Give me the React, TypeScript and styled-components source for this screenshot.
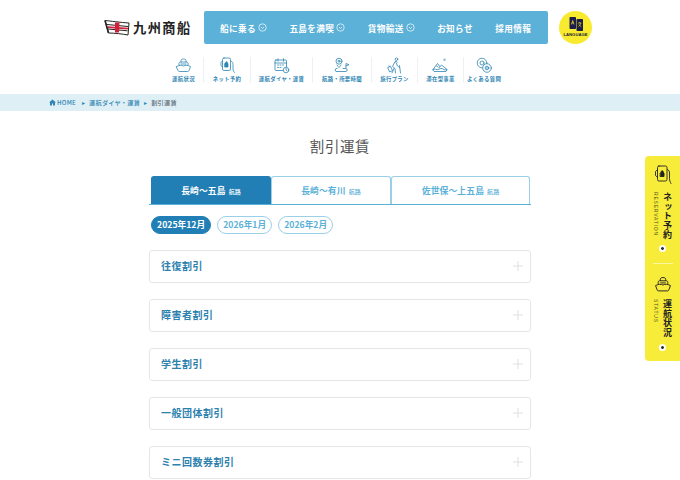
import React from 'react';
import styled, { createGlobalStyle } from 'styled-components';

const Global = createGlobalStyle`
  html, body { margin: 0; padding: 0; background: #fff; overflow: hidden; height: 480px; }
  body { font-family: "Noto Sans CJK JP", "Noto Sans", sans-serif; }
  * { box-sizing: border-box; }
`;

const Page = styled.div`
  position: relative;
  width: 680px;
  height: 480px;
  overflow: hidden;
`;
const Header = styled.header`
  display: flex;
  align-items: flex-start;
  padding: 11px 0 0 104px;
  height: 44px;
`;
const Logo = styled.div`
  display: flex;
  align-items: center;
  width: 100px;
  height: 33px;
  gap: 3px;
`;
const LogoText = styled.span`
  font-family: "Noto Sans CJK JP", sans-serif;
  font-weight: 700;
  font-size: 13.2px;
  letter-spacing: 1.5px;
  line-height: 1;
  color: #222;
  white-space: nowrap;
`;
const Nav = styled.nav`
  display: flex;
  align-items: center;
  gap: 22.4px;
  width: 344px;
  height: 33px;
  padding-left: 16px;
  background: #5cb1d8;
  border-radius: 2px;
`;
const NavItem = styled.span`
  display: flex;
  align-items: center;
  gap: 2px;
  color: #fff;
  font-size: 8.6px;
  font-weight: 700;
  letter-spacing: 0.4px;
  white-space: nowrap;
`;
const Lang = styled.div`
  display: flex;
  flex-direction: column;
  align-items: center;
  width: 33px;
  height: 33px;
  margin-left: 11px;
  padding-top: 6px;
  border-radius: 50%;
  background: #f8ea2f;
`;
const LangText = styled.span`
  font-family: "Liberation Sans", sans-serif;
  font-size: 4.2px;
  line-height: 5px;
  font-weight: 700;
  color: #1c1c3a;
`;
const SubNav = styled.div`
  display: flex;
  padding-left: 164px;
  height: 50px;
  padding-top: 13px;
`;
const SubItem = styled.div<{ $w: number; $last?: boolean }>`
  width: ${p => p.$w}px;
  height: 26px;
  display: flex;
  flex-direction: column;
  align-items: center;
  justify-content: space-between;
  border-right: ${p => (p.$last ? 'none' : '1px solid #eef1f3')};
`;
const SubLabel = styled.span`
  font-size: 5.4px;
  line-height: 7px;
  font-weight: 700;
  letter-spacing: 0.3px;
  color: #2f85b3;
  white-space: nowrap;
`;
const Crumbs = styled.div`
  display: flex;
  align-items: center;
  gap: 4px;
  height: 17px;
  padding-left: 49px;
  background: #dfeff6;
  font-size: 6.2px;
  letter-spacing: 0.2px;
  font-weight: 500;
  color: #2f85b3;
`;
const CrumbHome = styled.span`
  margin: 0 2px 0 -3px;
`;
const CrumbCurrent = styled.span`
  color: #5b6b74;
`;
const Title = styled.h1`
  margin: 24px 0 0;
  height: 41px;
  text-align: center;
  font-size: 14.5px;
  line-height: 21px;
  letter-spacing: 0.6px;
  font-weight: 400;
  color: #555;
`;
const Main = styled.main`
  width: 382px;
  margin-left: 149px;
`;
const Tabs = styled.div`
  display: flex;
  padding: 0 1px 0 2px;
  border-bottom: 1px solid #5cb1d8;
  height: 29px;
`;
const Tab = styled.div<{ $w: number; $active?: boolean }>`
  width: ${p => p.$w}px;
  height: 28px;
  display: flex;
  align-items: center;
  justify-content: center;
  gap: 3px;
  border: 1px solid ${p => (p.$active ? '#217fb5' : '#9ad0e7')};
  border-bottom: none;
  border-radius: 3px 3px 0 0;
  background: ${p => (p.$active ? '#217fb5' : '#fff')};
  color: ${p => (p.$active ? '#fff' : '#5cb1d8')};
  font-size: 8.8px;
  font-weight: 700;
  letter-spacing: 0.1px;
  padding-bottom: 1px;
`;
const TabSuffix = styled.span`
  font-size: 6px;
  font-weight: 500;
  margin-top: 2px;
`;
const Pills = styled.div`
  display: flex;
  gap: 6px;
  padding: 11px 0 0 2px;
  height: 45px;
`;
const Pill = styled.div<{ $active?: boolean }>`
  height: 18px;
  padding: 0 5px 1px;
  display: flex;
  align-items: center;
  border-radius: 9px;
  border: 1px solid ${p => (p.$active ? '#217fb5' : '#9ad0e7')};
  background: ${p => (p.$active ? '#217fb5' : '#fff')};
  color: ${p => (p.$active ? '#fff' : '#5cb1d8')};
  font-size: 8.7px;
  font-weight: 700;
`;
const Accordion = styled.div`
  display: flex;
  flex-direction: column;
  gap: 16px;
`;
const AccRow = styled.div`
  height: 33px;
  display: flex;
  align-items: center;
  justify-content: space-between;
  padding: 0 7px 2px 11px;
  border: 1.5px solid #e4e6e8;
  border-radius: 3px;
  background: #fff;
  color: #2c81ae;
  font-size: 10px;
  font-weight: 700;
  letter-spacing: 0.5px;
`;
const Side = styled.aside`
  position: absolute;
  top: 156px;
  right: 0;
  width: 35px;
  height: 205px;
  background: #f8ec3a;
  border-radius: 4px 0 0 4px;
  display: flex;
  flex-direction: column;
  align-items: center;
  padding-top: 9px;
`;
const SideBlock = styled.div<{ $h: number; $top: number }>`
  height: ${p => p.$h}px;
  padding-top: ${p => p.$top}px;
  display: flex;
  flex-direction: column;
  align-items: center;
  width: 100%;
`;
const SideBody = styled.div`
  display: flex;
  gap: 1px;
  margin-top: 7px;
  width: 21px;
`;
const SideEn = styled.span`
  writing-mode: vertical-rl;
  white-space: nowrap;
  font-family: "Liberation Sans", sans-serif;
  font-size: 5px;
  width: 8px;
  letter-spacing: 0.8px;
  line-height: 8px;
  color: #55521c;
`;
const SideJa = styled.span`
  writing-mode: vertical-rl;
  white-space: nowrap;
  width: 12px;
  font-size: 9px;
  line-height: 12px;
  font-weight: 700;
  letter-spacing: 0.6px;
  color: #222;
`;
const SideDot = styled.span<{ $gap: number }>`
  width: 7px;
  height: 7px;
  border-radius: 50%;
  margin-top: ${p => p.$gap}px;
  background: radial-gradient(circle, #333 0 1.2px, #fff 1.6px);
`;
const SideRule = styled.div`
  flex: none;
  width: 20px;
  height: 1px;
  background: #fbf6a4;
`;

const Circle = () => (
  <svg width="9" height="9" viewBox="0 0 9 9" fill="none" stroke="#fff" strokeWidth=".7">
    <circle cx="4.5" cy="4.5" r="3.7" />
    <path d="M3 4l1.5 1.5L6 4" />
  </svg>
);
const Ico = ({ children }: { children: React.ReactNode }) => (
  <svg width="17" height="17" viewBox="0 0 17 17" fill="none" stroke="#2f85b3" strokeWidth=".8" strokeLinecap="round" strokeLinejoin="round">
    {children}
  </svg>
);
const ShipPaths = () => (
  <>
    <path d="M6 5V3.500C6 2.500 7 2 8.500 2s2.500.5 2.500 1.500V5" />
    <path d="M4 8V6.500C4 5.500 4.700 5 5.500 5h6c.8 0 1.500.5 1.500 1.500V8" />
    <path d="M1.500 9.500c3-1.500 5-1.500 7-.5 2-1 4-1 7 .5L14 13.500c-.2.6-.6 1-1.200 1H4.200c-.6 0-1-.4-1.200-1z" />
    <path d="M6 7h5" />
  </>
);
const icons: React.ReactNode[] = [
  <Ico key="a"><ShipPaths /></Ico>,
  <Ico key="b">
    <rect x="3.500" y="1" width="8" height="12.500" rx="1.500" />
    <path d="M6 6.500h3v3.500H6zM6.700 6.500V5.500a.8.8 0 0 1 1.600 0v1" fill="#2f85b3" />
    <path d="M12 4c1.500.6 2 1.800 2 3.500v4.500c0 1.500.7 2.500 1.500 3.500" />
    <path d="M3.500 4C2.500 4.300 2 5 2 6v2c0 1 .5 1.500 1.500 2" />
  </Ico>,
  <Ico key="c">
    <rect x="2" y="3" width="11.500" height="10.500" rx="1" />
    <path d="M2 6h11.500M5 1.800v2.400M10.500 1.800v2.400M4.500 8h1M7 8h1M9.500 8h1M4.500 10.500h1M7 10.500h1" />
    <circle cx="13" cy="13" r="2.800" fill="#fff" />
    <path d="M13 11.500V13l1 .7" />
  </Ico>,
  <Ico key="d">
    <circle cx="5" cy="4.200" r="3" />
    <circle cx="5" cy="4.200" r="1" />
    <path d="M3 8c.7 1 1.300 1.700 2 2.500.7-.8 1.300-1.500 2-2.500" />
    <path d="M3 11.500H2c-1 0-1 3 0 3h10c1.500 0 1.500-3 0-3h-3M12 11V6.500l3 1.200-3 1.200" />
  </Ico>,
  <Ico key="e">
    <circle cx="10.500" cy="2.200" r="1.300" />
    <path d="M8.800 5L6.500 9.500 9 11.500l.5 4.500M10 5.500l1.500 3.500 2 1.500M9.300 4.500c1-.5 1.700-.3 2 .5M8 11.500l-2 4.500M13.500 8.500l1 7.500" />
    <path d="M2 10.500l2.500-1.300 2 4.300-2.500 1.300zM3.500 9.800L3 8.800" />
  </Ico>,
  <Ico key="f">
    <circle cx="12.500" cy="2.800" r="1.300" fill="#8fc3dc" stroke="none" />
    <path d="M1 12.500l4.500-6L8 9.500l1.500-1.500 5.500 4.500" />
    <path d="M1 12.500c2-1.500 3.500 1 5.500 0s3-1.500 4.500-.5 2.500 1.200 4 .5l-1 2H2.500z" />
    <path d="M4.500 9l1.500 1M8 9.500l-1 1.500" />
  </Ico>,
  <Ico key="g">
    <circle cx="6" cy="6" r="4.800" />
    <circle cx="6" cy="6" r="2" />
    <circle cx="11" cy="11" r="4.300" fill="#fff" />
    <circle cx="11" cy="11" r="1.800" />
    <path d="M11 10.300v1.400" />
  </Ico>,
];
const subItems = [
  { w: 40, t: '運航状況' },
  { w: 47, t: 'ネット予約' },
  { w: 62, t: '運航ダイヤ・運賃' },
  { w: 59, t: '航路・所要時間' },
  { w: 46, t: '旅行プラン' },
  { w: 46, t: '滞在型事業' },
  { w: 40, t: 'よくある質問' },
];

const ShipIcon = () => (
  <svg width="16" height="15" viewBox="1 1.500 15 14" fill="none" stroke="#222" strokeWidth=".9" strokeLinejoin="round">
    <ShipPaths />
  </svg>
);
const PhoneIconDark = () => (
  <svg width="18" height="20" viewBox="0 0 18 20" fill="none" stroke="#222" strokeWidth=".9" strokeLinecap="round" strokeLinejoin="round">
    <rect x="3.500" y="1" width="9.500" height="15" rx="1.500" />
    <path d="M6.500 8h3.500v3.500H6.500zM7.200 8V6.800a1 1 0 0 1 2 0V8" fill="#222" />
    <path d="M13.500 4.500c1.500.6 2 2 2 3.500v5.500c0 2 .7 3.500 1.500 5" />
    <path d="M3.500 5C2.500 5.300 1.500 6 1.500 7v3c0 1 1 1.700 2 2" />
  </svg>
);

const App = () => (
  <Page>
    <Global />
    <Header>
      <Logo>
        <svg width="26" height="17" viewBox="0 0 26 17">
          <path d="M1 1.500c5 .5 16 2 24 2.500l-1 12c-5-1-14-2-19.500-2z" fill="#fff" stroke="#222" strokeWidth="1" />
          <path d="M3 5.500l21 2M4 10l19.500 1.800" stroke="#222" strokeWidth="1" />
          <path d="M3.500 7.200l20.500 1.500-.2 1.700-20-1.500z" fill="#d2203a" />
          <path d="M11 3.500h4.500l-.5 10h-4z" fill="#d2203a" />
          <path d="M1 1.500l3.500 12.500" stroke="#222" strokeWidth="1.600" />
        </svg>
        <LogoText>九州商船</LogoText>
      </Logo>
      <Nav>
        <NavItem>船に乗る<Circle /></NavItem>
        <NavItem>五島を満喫<Circle /></NavItem>
        <NavItem>貨物輸送<Circle /></NavItem>
        <NavItem>お知らせ</NavItem>
        <NavItem>採用情報</NavItem>
      </Nav>
      <Lang>
        <svg width="16" height="15" viewBox="0 0 16 15">
          <rect x="1.500" y="0" width="6.500" height="12" rx=".8" fill="#1c1c4a" />
          <rect x="8.500" y="2" width="6.500" height="12" rx=".8" fill="#1c1c4a" />
          <path d="M3.400 7.500l1.300-4 1.300 4M3.900 6h1.600" stroke="#f8ea2f" strokeWidth=".7" fill="none" />
          <path d="M10 6h3.500M11.700 5v1M10.500 9.500c1.300-.8 2-2 2.200-3.500M10.800 7.500c.5 1 1.300 1.700 2.500 2" stroke="#f8ea2f" strokeWidth=".6" fill="none" />
        </svg>
        <LangText>LANGUAGE</LangText>
      </Lang>
    </Header>
    <SubNav>
      {subItems.map((s, i) => (
        <SubItem key={s.t} $w={s.w} $last={i === subItems.length - 1}>
          {icons[i]}
          <SubLabel>{s.t}</SubLabel>
        </SubItem>
      ))}
    </SubNav>
    <Crumbs>
      <svg width="7" height="7" viewBox="0 0 7 7"><path d="M3.500.5L0 3.500h1V6.500h2V4.500h1v2h2V3.500h1z" fill="#2f85b3" /></svg>
      <CrumbHome>HOME</CrumbHome>
      <span>▸</span>
      <span>運航ダイヤ・運賃</span>
      <span>▸</span>
      <CrumbCurrent>割引運賃</CrumbCurrent>
    </Crumbs>
    <Title>割引運賃</Title>
    <Main>
      <Tabs>
        <Tab $w={120} $active>長崎～五島<TabSuffix>航路</TabSuffix></Tab>
        <Tab $w={120}>長崎～有川<TabSuffix>航路</TabSuffix></Tab>
        <Tab $w={139}>佐世保～上五島<TabSuffix>航路</TabSuffix></Tab>
      </Tabs>
      <Pills>
        <Pill $active>2025年12月</Pill>
        <Pill>2026年1月</Pill>
        <Pill>2026年2月</Pill>
      </Pills>
      <Accordion>
        {['往復割引', '障害者割引', '学生割引', '一般団体割引', 'ミニ回数券割引'].map(t => (
          <AccRow key={t}>
            {t}
            <svg width="10" height="10" viewBox="0 0 10 10"><path d="M5 0v10M0 5h10" stroke="#dcdfe1" strokeWidth="1" /></svg>
          </AccRow>
        ))}
      </Accordion>
    </Main>
    <Side>
      <SideBlock $h={98} $top={0}>
        <PhoneIconDark />
        <SideBody>
          <SideEn>RESERVATION</SideEn>
          <SideJa>ネット予約</SideJa>
        </SideBody>
        <SideDot $gap={5} />
      </SideBlock>
      <SideRule />
      <SideBlock $h={90} $top={13}>
        <ShipIcon />
        <SideBody>
          <SideEn>STATUS</SideEn>
          <SideJa>運航状況</SideJa>
        </SideBody>
        <SideDot $gap={7} />
      </SideBlock>
    </Side>
  </Page>
);

export default App;
